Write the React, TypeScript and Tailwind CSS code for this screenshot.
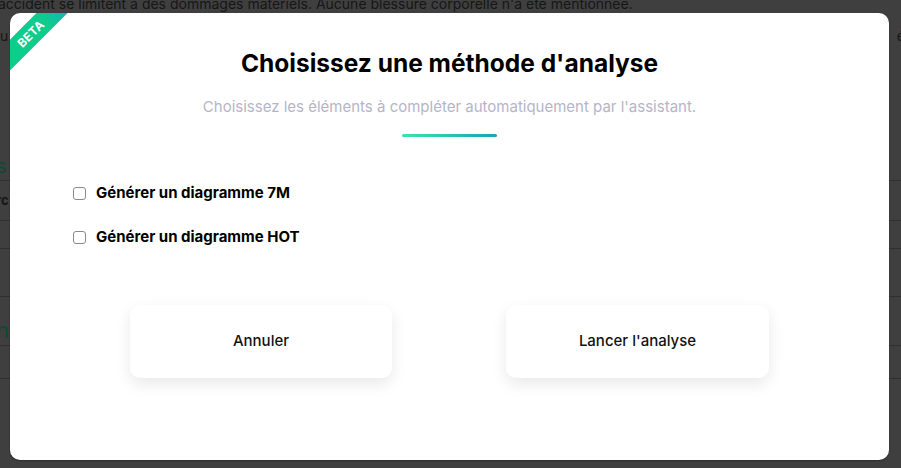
import { useState } from "react";

function BetaRibbon() {
  return (
    <div className="absolute left-[-31px] top-[10px] w-[104px] h-[22px] -rotate-45 bg-gradient-to-r from-[#06d088] via-[#0fcb8f] via-70% to-[#1aa8c2] flex items-center justify-center">
      <span className="text-white font-bold text-[12px] tracking-wide leading-none">BETA</span>
    </div>
  );
}

function Option({ label }: { label: string }) {
  const [checked, setChecked] = useState(false);
  return (
    <label className="flex items-center gap-[10px] cursor-pointer">
      <input
        type="checkbox"
        checked={checked}
        onChange={() => setChecked(!checked)}
        className="w-[13px] h-[13px] appearance-none border border-[#8a8a8a] rounded-[3px] bg-white checked:bg-[#1aa6b8]"
      />
      <span className="text-[15px] font-bold text-black leading-[20px]">{label}</span>
    </label>
  );
}

function Backdrop() {
  return (
    <div className="flex flex-col text-[#161616] text-[14px]">
      <p className="-mt-[6px] -ml-[2px] whitespace-nowrap leading-[20px]">
        accident se limitent à des dommages matériels. Aucune blessure corporelle n'a été mentionnée.
      </p>
      <div className="flex justify-between leading-[20px] mt-[12px]">
        <span>u</span>
        <span className="mr-[-4px]">é</span>
      </div>
      <div className="h-[134px] flex items-end">
        <span className="text-[#0e4a31] text-[20px] -ml-[4px] leading-[28px]">s</span>
      </div>
      <div className="border-t border-[#303030] h-[40px] flex items-center">
        <span className="font-bold text-[13px] -ml-[4px]">rc</span>
      </div>
      <div className="border-t border-[#303030] h-[28px]" />
      <div className="border-t border-[#303030] h-[48px]" />
      <div className="border-t border-[#303030] h-[49px] flex items-end">
        <span className="text-[#0e4a31] text-[22px] -ml-[4px] leading-[30px]">n</span>
      </div>
      <div className="border-t border-[#303030] h-[33px]" />
      <div className="border-t border-[#303030] h-[50px]" />
    </div>
  );
}

export default function App() {
  return (
    <div className="relative w-[901px] h-[468px] overflow-hidden bg-[#3f3f3f] font-['Inter',sans-serif]">
      <Backdrop />
      <div className="absolute left-[10px] top-[13px] w-[879px] h-[447px] bg-white rounded-[10px] overflow-hidden shadow-[0_1px_2px_rgba(0,0,0,0.3)]">
        <BetaRibbon />
        <div className="flex flex-col items-center pt-[35px]">
          <h2 className="text-[24.5px] font-bold text-black leading-[30px]">Choisissez une méthode d'analyse</h2>
          <p className="mt-[20px] text-[15px] text-[#b5b5c8] leading-[18px]">
            Choisissez les éléments à compléter automatiquement par l'assistant.
          </p>
          <div className="mt-[18px] w-[95px] h-[3px] rounded-full bg-gradient-to-r from-[#3ce3ab] to-[#1aa3b6]" />
        </div>
        <div className="flex flex-col gap-[24px] pl-[63px] mt-[46px]">
          <Option label="Générer un diagramme 7M" />
          <Option label="Générer un diagramme HOT" />
        </div>
        <div className="flex justify-between pl-[120px] pr-[120px] mt-[58px]">
          <button className="w-[262px] h-[73px] rounded-[10px] bg-white shadow-[0_6px_16px_rgba(0,0,0,0.09)] text-[15px] font-medium text-[#111]">
            Annuler
          </button>
          <button className="w-[263px] h-[73px] rounded-[10px] bg-white shadow-[0_6px_16px_rgba(0,0,0,0.09)] text-[15px] font-medium text-[#111]">
            Lancer l'analyse
          </button>
        </div>
      </div>
    </div>
  );
}
